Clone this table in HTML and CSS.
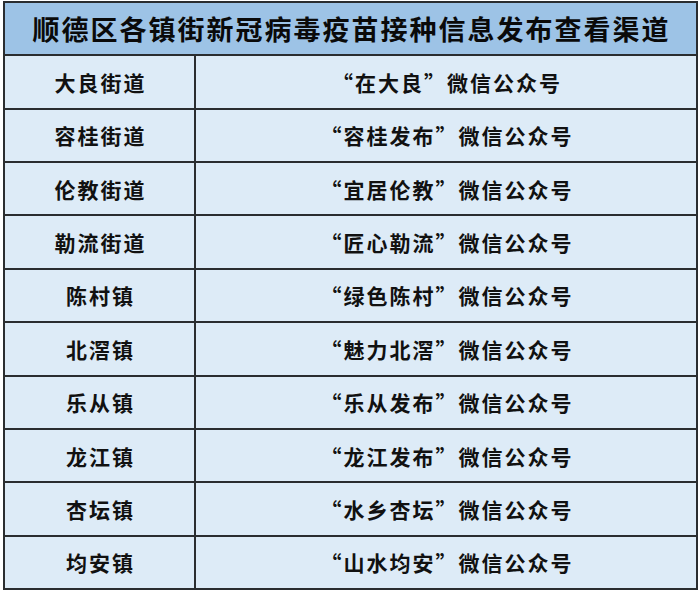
FILE: index.html
```html
<!DOCTYPE html>
<html lang="zh-CN">
<head>
<meta charset="utf-8">
<title>顺德区各镇街新冠病毒疫苗接种信息发布查看渠道</title>
<link rel="stylesheet" href="styles.css">
</head>
<body>
<div class="sheet">
  <div class="title">顺德区各镇街新冠病毒疫苗接种信息发布查看渠道</div>
  <div class="cell town">大良街道</div><div class="cell channel">“在大良”微信公众号</div>
  <div class="cell town">容桂街道</div><div class="cell channel">“容桂发布”微信公众号</div>
  <div class="cell town">伦教街道</div><div class="cell channel">“宜居伦教”微信公众号</div>
  <div class="cell town">勒流街道</div><div class="cell channel">“匠心勒流”微信公众号</div>
  <div class="cell town">陈村镇</div><div class="cell channel">“绿色陈村”微信公众号</div>
  <div class="cell town">北滘镇</div><div class="cell channel">“魅力北滘”微信公众号</div>
  <div class="cell town">乐从镇</div><div class="cell channel">“乐从发布”微信公众号</div>
  <div class="cell town">龙江镇</div><div class="cell channel">“龙江发布”微信公众号</div>
  <div class="cell town">杏坛镇</div><div class="cell channel">“水乡杏坛”微信公众号</div>
  <div class="cell town">均安镇</div><div class="cell channel">“山水均安”微信公众号</div>
</div>
</body>
</html>
```

FILE: styles.css
```css
html, body {
  margin: 0;
  padding: 0;
  background: #ffffff;
}

body {
  font-family: "Noto Sans CJK SC", "Noto Sans", sans-serif;
  color: #111111;
}

.sheet {
  box-sizing: border-box;
  margin: 1px 0 0 3px;
  width: 695px;
  height: 589px;
  padding: 2px;
  display: grid;
  grid-template-columns: 189px 500px;
  grid-auto-rows: 1fr;
  gap: 2px;
  background: #2a2d30;
}

.title {
  grid-column: 1 / 3;
  background: #9dc3e6;
  display: flex;
  align-items: center;
  justify-content: center;
  font-size: 27px;
  font-weight: 700;
  letter-spacing: 2px;
  padding-left: 2px;
  color: #0a0a0a;
}

.cell {
  background: #ddebf7;
  display: flex;
  align-items: center;
  justify-content: center;
  font-size: 21px;
  font-weight: 700;
  letter-spacing: 2px;
  padding-left: 2px;
}
```
